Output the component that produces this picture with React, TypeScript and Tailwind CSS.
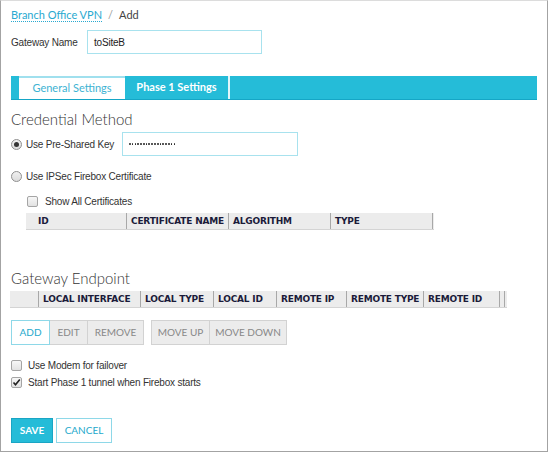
import { useState } from 'react';

const certCols = [
    { label: 'ID', w: 'w-[101px]' },
    { label: 'CERTIFICATE NAME', w: 'w-[102px]' },
    { label: 'ALGORITHM', w: 'w-[102px]' },
    { label: 'TYPE', w: 'w-[102px]' },
];

const endpointCols = [
    { label: '', w: 'w-[29px]' },
    { label: 'LOCAL INTERFACE', w: 'w-[102px]' },
    { label: 'LOCAL TYPE', w: 'w-[73px]' },
    { label: 'LOCAL ID', w: 'w-[63px]' },
    { label: 'REMOTE IP', w: 'w-[70px]' },
    { label: 'REMOTE TYPE', w: 'w-[77px]' },
    { label: 'REMOTE ID', w: 'w-[76px]' },
    { label: '', w: 'w-[5px]' },
];

const HeaderRow = ({ cols }: { cols: { label: string; w: string }[] }) => (
    <div className="flex h-[17px] bg-[#ececec] border-b border-[#d4d4d4]">
        {cols.map((c, i) => (
            <div
                key={i}
                className={`${c.w} shrink-0 flex items-center pl-[4px] text-[9px] font-bold text-[#1b1b3a] border-r border-[#a8a8a8] leading-none whitespace-nowrap`}
                style={{ fontFamily: 'Verdana, "DejaVu Sans", sans-serif', paddingLeft: i === 0 && c.label === 'ID' ? 12 : undefined }}
            >
                {c.label}
            </div>
        ))}
    </div>
);

const Radio = ({ on }: { on?: boolean }) => (
    <span className="w-[11px] h-[11px] rounded-full border border-[#8f8f8f] bg-gradient-to-b from-[#f0f0f0] to-[#dcdcdc] flex items-center justify-center shrink-0">
        {on && <span className="w-[5px] h-[5px] rounded-full bg-[#333]" />}
    </span>
);

const Check = ({ on }: { on?: boolean }) => (
    <span className="w-[11px] h-[11px] rounded-[2px] border border-[#a5a5a5] bg-gradient-to-b from-[#f7f7f7] to-[#e2e2e2] flex items-center justify-center shrink-0">
        {on && (
            <svg width="9" height="9" viewBox="0 0 9 9">
                <path d="M1.5 4.5 L3.5 6.8 L7.8 1.5" stroke="#222" strokeWidth="1.6" fill="none" />
            </svg>
        )}
    </span>
);

export default function App() {
    const [tab] = useState('general');
    const sans = { fontFamily: '"Liberation Sans", Arial, sans-serif' };
    const light = { fontFamily: 'Lato, "Open Sans", sans-serif' };

    return (
        <div className="w-[548px] h-[452px] bg-white border border-[#a3a3a3] border-t-[#dcdcdc] overflow-hidden text-[10px] tracking-[-0.2px] text-[#333]" style={sans}>
            <div className="pl-[10px] pr-[10px]">
                {/* breadcrumb */}
                <div className="flex items-center gap-[6px] pt-[6px] h-[22px] text-[11px] tracking-normal" style={light}>
                    <span className="text-[#29a9d0] border-b border-dotted border-[#29a9d0] leading-[13px]">Branch Office VPN</span>
                    <span className="text-[#999]">/</span>
                    <span className="text-[#444]">Add</span>
                </div>

                {/* gateway name */}
                <div className="flex items-center mt-[7px] h-[24px]">
                    <div className="w-[76px] shrink-0">Gateway Name</div>
                    <div className="w-[175px] shrink-0 h-[24px] border border-[#a8e2ee] flex items-center px-[6px] text-[#222]">toSiteB</div>
                </div>

                {/* tabs */}
                <div className="mt-[22px] flex h-[24px] w-[526px] bg-[#25bcd8] border-b border-[#15a6c6] tracking-normal">
                    <div className="w-[8px]" />
                    <div className={`w-[106px] flex items-center justify-center text-[11px] ${tab === 'general' ? 'bg-white text-[#3eb3d3] border-t-2 border-[#a0e0ee]' : ''}`} style={light}>
                        General Settings
                    </div>
                    <div className="w-[105px] flex items-center justify-center text-white font-bold text-[11px] border-r-2 border-[#e3f6fa]" style={light}>
                        Phase 1 Settings
                    </div>
                </div>

                {/* credential method */}
                <div className="mt-[9px] text-[15px] font-light text-[#333] leading-[20px] tracking-normal" style={light}>Credential Method</div>
                <div className="flex items-center mt-[3px] h-[24px]">
                    <Radio on />
                    <div className="ml-[4px] w-[96px] shrink-0 whitespace-nowrap">Use Pre-Shared Key</div>
                    <div className="w-[176px] shrink-0 h-[24px] border border-[#a8e2ee] flex items-center gap-[1.1px] px-[6px]">
                        {Array.from({ length: 17 }).map((_, i) => (
                            <span key={i} className="w-[1.7px] h-[1.7px] rounded-full bg-[#222]" />
                        ))}
                    </div>
                </div>
                <div className="flex items-center mt-[12px] h-[16px]">
                    <Radio />
                    <span className="ml-[4px]">Use IPSec Firebox Certificate</span>
                </div>
                <div className="flex items-center mt-[9px] ml-[16px] h-[16px]">
                    <Check />
                    <span className="ml-[7px]">Show All Certificates</span>
                </div>
                <div className="ml-[15px] mt-[4px] w-[408px]">
                    <HeaderRow cols={certCols} />
                </div>

                {/* gateway endpoint */}
                <div className="mt-[38px] text-[15px] font-light text-[#333] leading-[20px] tracking-normal" style={light}>Gateway Endpoint</div>
                <div className="mt-[3px] -ml-[1px] w-[497px]">
                    <HeaderRow cols={endpointCols} />
                </div>

                <div className="flex mt-[12px] h-[25px] text-[10px] tracking-normal" style={light}>
                    <button className="w-[39px] border border-[#8ed8e8] bg-white text-[#1ea9cc]">ADD</button>
                    <button className="w-[38px] border-y border-r border-[#d2d2d2] bg-[#ececec] text-[#888]">EDIT</button>
                    <button className="w-[56px] border-y border-r border-[#d2d2d2] bg-[#ececec] text-[#888]">REMOVE</button>
                    <button className="ml-[7px] w-[59px] border border-[#d2d2d2] bg-[#ececec] text-[#888]">MOVE UP</button>
                    <button className="w-[77px] border-y border-r border-[#d2d2d2] bg-[#ececec] text-[#888]">MOVE DOWN</button>
                </div>

                <div className="flex items-center mt-[13px] h-[14px]">
                    <Check />
                    <span className="ml-[6px]">Use Modem for failover</span>
                </div>
                <div className="flex items-center mt-[3px] h-[14px]">
                    <Check on />
                    <span className="ml-[6px]">Start Phase 1 tunnel when Firebox starts</span>
                </div>

                <div className="flex mt-[29px] h-[25px] gap-[3px] text-[10px] font-bold tracking-normal" style={light}>
                    <button className="w-[42px] bg-[#25bcd8] border border-[#1aa5c4] text-white">SAVE</button>
                    <button className="w-[56px] bg-white border border-[#8ed8e8] text-[#1ea9cc] font-normal">CANCEL</button>
                </div>
            </div>
        </div>
    );
}
